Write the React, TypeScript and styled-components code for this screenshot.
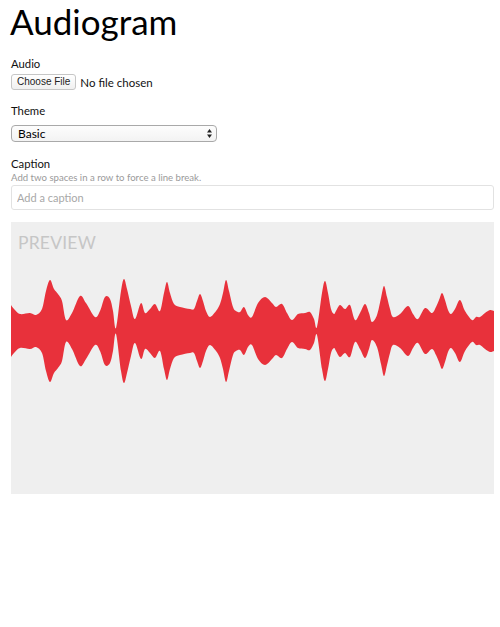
import React from "react";
import styled, { createGlobalStyle } from "styled-components";

const GlobalStyle = createGlobalStyle`
  html, body { margin: 0; padding: 0; background: #fff; }
  body { font-family: Lato, "Open Sans", sans-serif; color: #111; }
  * { box-sizing: border-box; }
`;

const Page = styled.div`
  display: flex;
  flex-direction: column;
  padding: 0 6px 0 11px;
`;

const Title = styled.h1`
  margin: 0 0 15px -1px;
  font-family: Lato, sans-serif;
  font-weight: 400;
  font-size: 35px;
  line-height: 42px;
  color: #000;
`;

const Field = styled.div<{ $mb: number }>`
  display: flex;
  flex-direction: column;
  margin-bottom: ${(p) => p.$mb}px;
`;

const Label = styled.label`
  font-family: Lato, sans-serif;
  font-size: 11.3px;
  line-height: 14px;
  color: #111;
`;

const Hint = styled.div`
  font-family: Lato, sans-serif;
  font-size: 9.6px;
  line-height: 12px;
  color: #9a9a9a;
  margin-top: 1px;
`;

const FileRow = styled.div`
  display: flex;
  align-items: center;
  gap: 4px;
  margin-top: 3px;
`;

const FileButton = styled.button`
  font-family: "Liberation Sans", Arial, sans-serif;
  font-size: 10px;
  height: 16px;
  padding: 0 5px;
  line-height: 14px;
  color: #222;
  background: linear-gradient(#fff, #f0f0f0);
  border: 1px solid #c6c6c6;
  border-radius: 3px;
`;

const FileText = styled.span`
  font-family: Lato, sans-serif;
  font-size: 11.5px;
  color: #111;
`;

const SelectWrap = styled.div`
  position: relative;
  width: 206px;
  margin-top: 7px;
`;

const Select = styled.select`
  appearance: none;
  -webkit-appearance: none;
  display: block;
  width: 100%;
  height: 17px;
  padding: 0 0 0 6px;
  font-family: Lato, sans-serif;
  font-size: 12px;
  color: #000;
  background: linear-gradient(#fdfdfd, #f3f3f3);
  border: 1px solid #a9a9a9;
  border-radius: 4px;
  outline: none;
`;

const Arrows = styled.svg`
  position: absolute;
  right: 5px;
  top: 4px;
  pointer-events: none;
`;

const CaptionInput = styled.input`
  display: block;
  width: 100%;
  height: 25px;
  margin-top: 1px;
  padding: 0 5px;
  font-family: Lato, sans-serif;
  font-size: 11px;
  border: 1px solid #e2e2e2;
  border-radius: 3px;
  outline: none;
  &::placeholder { color: #a8a8a8; }
`;

const Preview = styled.div`
  display: flex;
  flex-direction: column;
  height: 272px;
  background: #efefef;
`;

const PreviewLabel = styled.div`
  font-family: Lato, sans-serif;
  font-size: 17.5px;
  line-height: 20px;
  height: 32px;
  padding: 11px 0 0 7px;
  color: #c6c6c6;
  letter-spacing: 0.2px;
`;

const Wave = styled.svg`
  display: block;
`;

const pts: [number, number][] = [
  [11,26],[14,22],[20,17],[30,18],[36,16],[42,22],[46,40],[50,51],[54,42],[58,37],[62,30],[66,11],[72,18],[80,35],[86,28],[95,14],[100,20],[105,34],[110,32],[113,20],[116,3],[121,40],[124,52],[127,42],[131,25],[135,12],[141,28],[145,18],[150,22],[155,27],[160,20],[164,38],[167,49],[170,38],[174,27],[180,24],[190,22],[194,22],[197,30],[200,37],[203,30],[206,20],[210,14],[216,20],[220,27],[223,38],[226,51],[229,40],[233,24],[236,20],[240,19],[244,24],[248,16],[252,14],[258,28],[265,34],[272,28],[276,24],[282,27],[287,18],[292,11],[298,17],[305,18],[310,19],[314,12],[317,4],[322,38],[325,50],[328,38],[331,22],[334,17],[336,20],[340,26],[345,22],[350,26],[355,11],[360,18],[365,27],[369,18],[372,9],[377,16],[381,33],[384,45],[387,34],[390,22],[393,14],[400,17],[408,25],[413,17],[418,12],[425,23],[432,18],[436,24],[439,31],[442,38],[445,31],[448,21],[451,17],[455,22],[460,31],[465,20],[472,11],[476,14],[480,14],[485,18],[490,21],[494,20],
];

const CY = 77;

function curve(points: [number, number][], sign: number, first: boolean): string {
  const p = points.map(([x, a]) => [x - 11, CY + sign * a] as [number, number]);
  let d = first ? `M${p[0][0]},${p[0][1]}` : `L${p[0][0]},${p[0][1]}`;
  for (let i = 0; i < p.length - 1; i++) {
    const p0 = p[i - 1] || p[i];
    const p1 = p[i];
    const p2 = p[i + 1];
    const p3 = p[i + 2] || p2;
    const c1x = p1[0] + (p2[0] - p0[0]) / 6;
    const c1y = p1[1] + (p2[1] - p0[1]) / 6;
    const c2x = p2[0] - (p3[0] - p1[0]) / 6;
    const c2y = p2[1] - (p3[1] - p1[1]) / 6;
    d += ` C${c1x.toFixed(2)},${c1y.toFixed(2)} ${c2x.toFixed(2)},${c2y.toFixed(2)} ${p2[0]},${p2[1]}`;
  }
  return d;
}

const wavePath =
  curve(pts, -1, true) + " " + curve([...pts].reverse(), 1, false) + " Z";

export default function App() {
  return (
    <>
      <GlobalStyle />
      <Page>
        <Title>Audiogram</Title>
        <Field $mb={14}>
          <Label>Audio</Label>
          <FileRow>
            <FileButton type="button">Choose File</FileButton>
            <FileText>No file chosen</FileText>
          </FileRow>
        </Field>
        <Field $mb={15}>
          <Label>Theme</Label>
          <SelectWrap>
            <Select defaultValue="Basic">
              <option>Basic</option>
            </Select>
            <Arrows width="5" height="9" viewBox="0 0 5 9">
              <path d="M0 3.6 L2.5 0 L5 3.6 Z" fill="#222" />
              <path d="M0 5.4 L2.5 9 L5 5.4 Z" fill="#222" />
            </Arrows>
          </SelectWrap>
        </Field>
        <Field $mb={12}>
          <Label>Caption</Label>
          <Hint>Add two spaces in a row to force a line break.</Hint>
          <CaptionInput placeholder="Add a caption" />
        </Field>
        <Preview>
          <PreviewLabel>PREVIEW</PreviewLabel>
          <Wave width="483" height="150" viewBox="0 0 483 150">
            <path d={wavePath} fill="#e8313b" />
          </Wave>
        </Preview>
      </Page>
    </>
  );
}
